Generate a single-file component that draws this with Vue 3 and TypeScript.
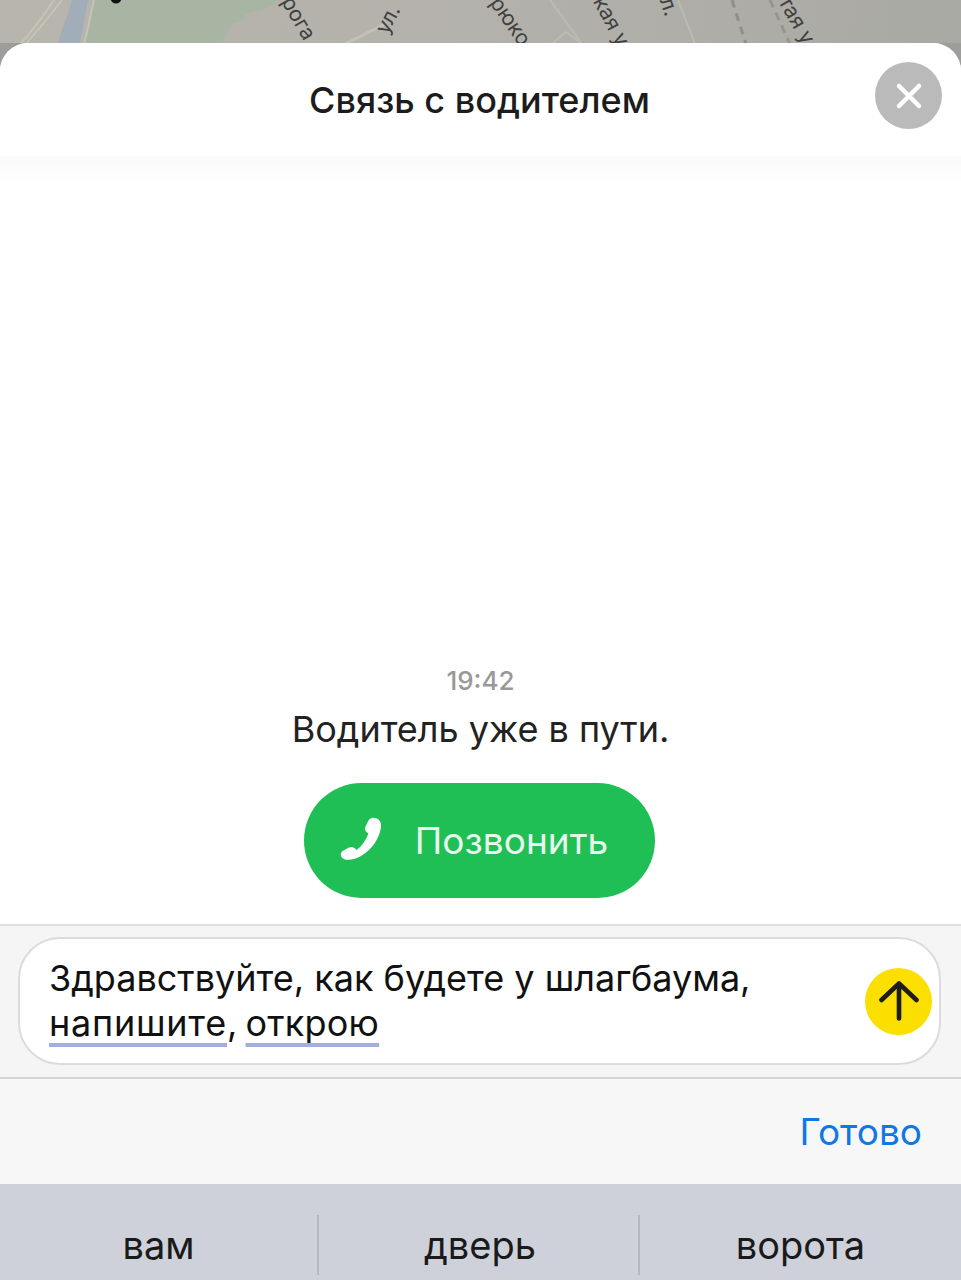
<script setup lang="ts">
const suggestions = ['вам', 'дверь', 'ворота']

const mapLabels = [
  { text: 'рога', x: 287, y: -14, angle: 60 },
  { text: 'ул.', x: 381, y: 20, angle: -62 },
  { text: 'рюко', x: 495, y: -13, angle: 55 },
  { text: 'кая у', x: 599, y: -14, angle: 62 },
  { text: 'л.', x: 666, y: -14, angle: 70 },
  { text: 'тая у', x: 784, y: -14, angle: 60 },
]
</script>

<template>
  <div class="screen">
    <div class="map">
      <svg class="map-art" width="961" height="60" viewBox="0 0 961 60" fill="none">
        <path d="M92 0 H278 L268 8 L246 14 L244 20 L232 24 L222 44 H84 C88 26 90 14 92 0 Z" fill="#a8b5a3" />
        <path d="M72 0 C68 16 62 28 58 44 H80 C82 28 86 14 88 0 Z" fill="#a1adb8" />
        <path d="M62 0 C50 16 38 30 26 44 M54 0 C44 14 34 30 20 44 M94 0 C90 16 88 30 84 44" stroke="#c6c4b4" stroke-width="2" />
        <path d="M345 44 L385 24" stroke="#c2c1b8" stroke-width="3" />
        <path d="M550 0 L582 44 M552 44 L566 32 L582 44" stroke="#bcbbb2" stroke-width="2" />
        <path d="M678 0 L695 44" stroke="#bcbbb2" stroke-width="2" />
        <path d="M732 0 L746 44" stroke="#8f8f8b" stroke-width="3" stroke-dasharray="8 6" />
        <path d="M770 0 L790 44" stroke="#969691" stroke-width="3" stroke-dasharray="8 6" />
        <circle cx="116" cy="-2" r="5.5" fill="#111" />
      </svg>
      <span
        v-for="label in mapLabels"
        :key="label.text"
        class="map-label"
        :style="{ left: label.x + 'px', top: label.y + 'px', transform: `rotate(${label.angle}deg)` }"
      >{{ label.text }}</span>
    </div>

    <main class="sheet">
      <header class="sheet-head">
        <h1 class="sheet-title">Связь с водителем</h1>
        <button class="close-btn" aria-label="Закрыть">
          <svg width="28" height="28" viewBox="0 0 28 28" fill="none">
            <path d="M4 4 L24 24 M24 4 L4 24" stroke="#fff" stroke-width="4.5" stroke-linecap="round" />
          </svg>
        </button>
      </header>

      <section class="chat">
        <time class="chat-time">19:42</time>
        <p class="chat-text">Водитель уже в пути.</p>
        <button class="call-btn">
          <svg width="46" height="46" viewBox="0 0 46 46">
            <path
              d="M39 2.5 C42 4 43.5 7 43 11 C41.5 23 32 38 16 43 C11 44.5 5.5 44 3.5 41 C2 38.5 3 36 5.5 34.5 L11 31.5 C13 30.5 15.5 31 17 32.5 L18.5 34 C24 30 28 24 30.5 17.5 L28.5 16 C27 14.5 26.5 12.5 27.5 10.5 L30.5 4.5 C32 1.5 36 1 39 2.5 Z"
              fill="#fff"
            />
          </svg>
          <span class="call-label">Позвонить</span>
        </button>
      </section>

      <div class="composer">
        <div class="input-box">
          <p class="input-text">
            Здравствуйте, как будете у шлагбаума,<br />
            <span class="typo typo-first">напишите</span><span class="comma">, </span><span class="typo typo-second">открою</span>
          </p>
          <button class="send-btn" aria-label="Отправить">
            <svg width="40" height="42" viewBox="0 0 40 42" fill="none">
              <path d="M20 38.5 V3.5 M2.5 20 L20 3.5 L37.5 20" stroke="#1d1d1b" stroke-width="4.6" stroke-linecap="round" stroke-linejoin="round" />
            </svg>
          </button>
        </div>
      </div>

      <div class="done-bar">
        <span class="done">Готово</span>
      </div>

      <div class="suggest-bar">
        <div v-for="word in suggestions" :key="word" class="suggest">{{ word }}</div>
      </div>
    </main>
  </div>
</template>

<style>
html,
body {
  margin: 0;
  background: #fff;
}
</style>

<style scoped>
.screen {
  position: relative;
  width: 961px;
  height: 1280px;
  overflow: hidden;
  background: #9d9d99;
  font-family: Inter, "Noto Sans", "Liberation Sans", sans-serif;
  color: #1c1c1c;
}

.map {
  position: relative;
  height: 43px;
  background: linear-gradient(100deg, #b8b5ae 0%, #b3b1ab 50%, #a9a9a4 100%);
  overflow: hidden;
}

.map-art {
  position: absolute;
  left: 0;
  top: 0;
}

.map-label {
  position: absolute;
  font-size: 21px;
  line-height: 24px;
  color: #40403e;
  white-space: nowrap;
  transform-origin: left center;
}

.sheet {
  display: flex;
  flex-direction: column;
  height: 1237px;
  background: #fff;
  border-radius: 28px 28px 0 0;
  overflow: hidden;
}

.sheet-head {
  position: relative;
  flex: none;
  height: 113px;
  display: flex;
  align-items: center;
  justify-content: center;
  background: #fff;
}

.sheet-title {
  margin: 0 2px 0 0;
  font-size: 36px;
  line-height: 44px;
  font-weight: 500;
}

.close-btn {
  position: absolute;
  right: 19px;
  top: 19px;
  width: 67px;
  height: 67px;
  padding: 0;
  display: flex;
  align-items: center;
  justify-content: center;
  border: 0;
  border-radius: 50%;
  background: #bababa;
}

.chat {
  flex: 1;
  min-height: 0;
  display: flex;
  flex-direction: column;
  align-items: center;
  justify-content: flex-end;
  padding-bottom: 26px;
  background: linear-gradient(#fafafa, #fff 30px);
}

.chat-time {
  font-size: 26px;
  line-height: 32px;
  font-weight: 500;
  color: #999;
}

.chat-text {
  margin: 10px 0 32px;
  font-size: 36px;
  line-height: 44px;
  color: #222;
}

.call-btn {
  display: flex;
  align-items: center;
  justify-content: center;
  gap: 31px;
  width: 351px;
  height: 115px;
  margin-right: 2px;
  padding: 0 13px 0 0;
  border: 0;
  border-radius: 58px;
  background: #20bf55;
  color: #e8f8ee;
  font-family: inherit;
  font-size: 37px;
}

.call-btn svg {
  margin-bottom: 4px;
}

.composer {
  flex: none;
  height: 155px;
  box-sizing: border-box;
  padding: 11px 20px 12px 18px;
  background: #f5f5f5;
  border-top: 2px solid #dfdfdf;
  border-bottom: 2px solid #d4d4d6;
}

.input-box {
  height: 100%;
  box-sizing: border-box;
  display: flex;
  align-items: center;
  justify-content: space-between;
  padding: 0 7px 0 29px;
  background: #fff;
  border: 2px solid #dcdce0;
  border-radius: 42px;
}

.input-text {
  margin: 0;
  font-size: 36px;
  line-height: 45px;
  color: #111;
}

.typo {
  text-decoration: underline;
  text-decoration-color: #a3aedd;
  text-decoration-thickness: 4px;
  text-decoration-skip-ink: none;
  text-underline-offset: 7px;
}

.typo-first {
  letter-spacing: 0.75px;
}

.typo-second {
  letter-spacing: 0.2px;
}

.comma {
  word-spacing: -2px;
}

.send-btn {
  flex: none;
  width: 67px;
  height: 67px;
  padding: 0;
  display: flex;
  align-items: center;
  justify-content: center;
  border: 0;
  border-radius: 50%;
  background: #fbdf00;
}

.done-bar {
  flex: none;
  height: 105px;
  box-sizing: border-box;
  display: flex;
  justify-content: flex-end;
  align-items: center;
  padding: 0 39px 0 0;
  background: #f7f7f7;
}

.done {
  font-size: 37px;
  color: #0f78e6;
}

.suggest-bar {
  flex: none;
  height: 96px;
  box-sizing: border-box;
  display: grid;
  grid-template-columns: 317px 321px 323px;
  align-items: start;
  padding-top: 31px;
  background: #cfd1da;
}

.suggest {
  display: flex;
  align-items: center;
  justify-content: center;
  height: 60px;
  font-size: 38px;
  color: #1a1a1a;
  border-left: 2px solid #b6b8c0;
}

.suggest:first-child {
  border-left: 0;
}

.suggest:nth-child(2) {
  padding-left: 3px;
}
</style>
